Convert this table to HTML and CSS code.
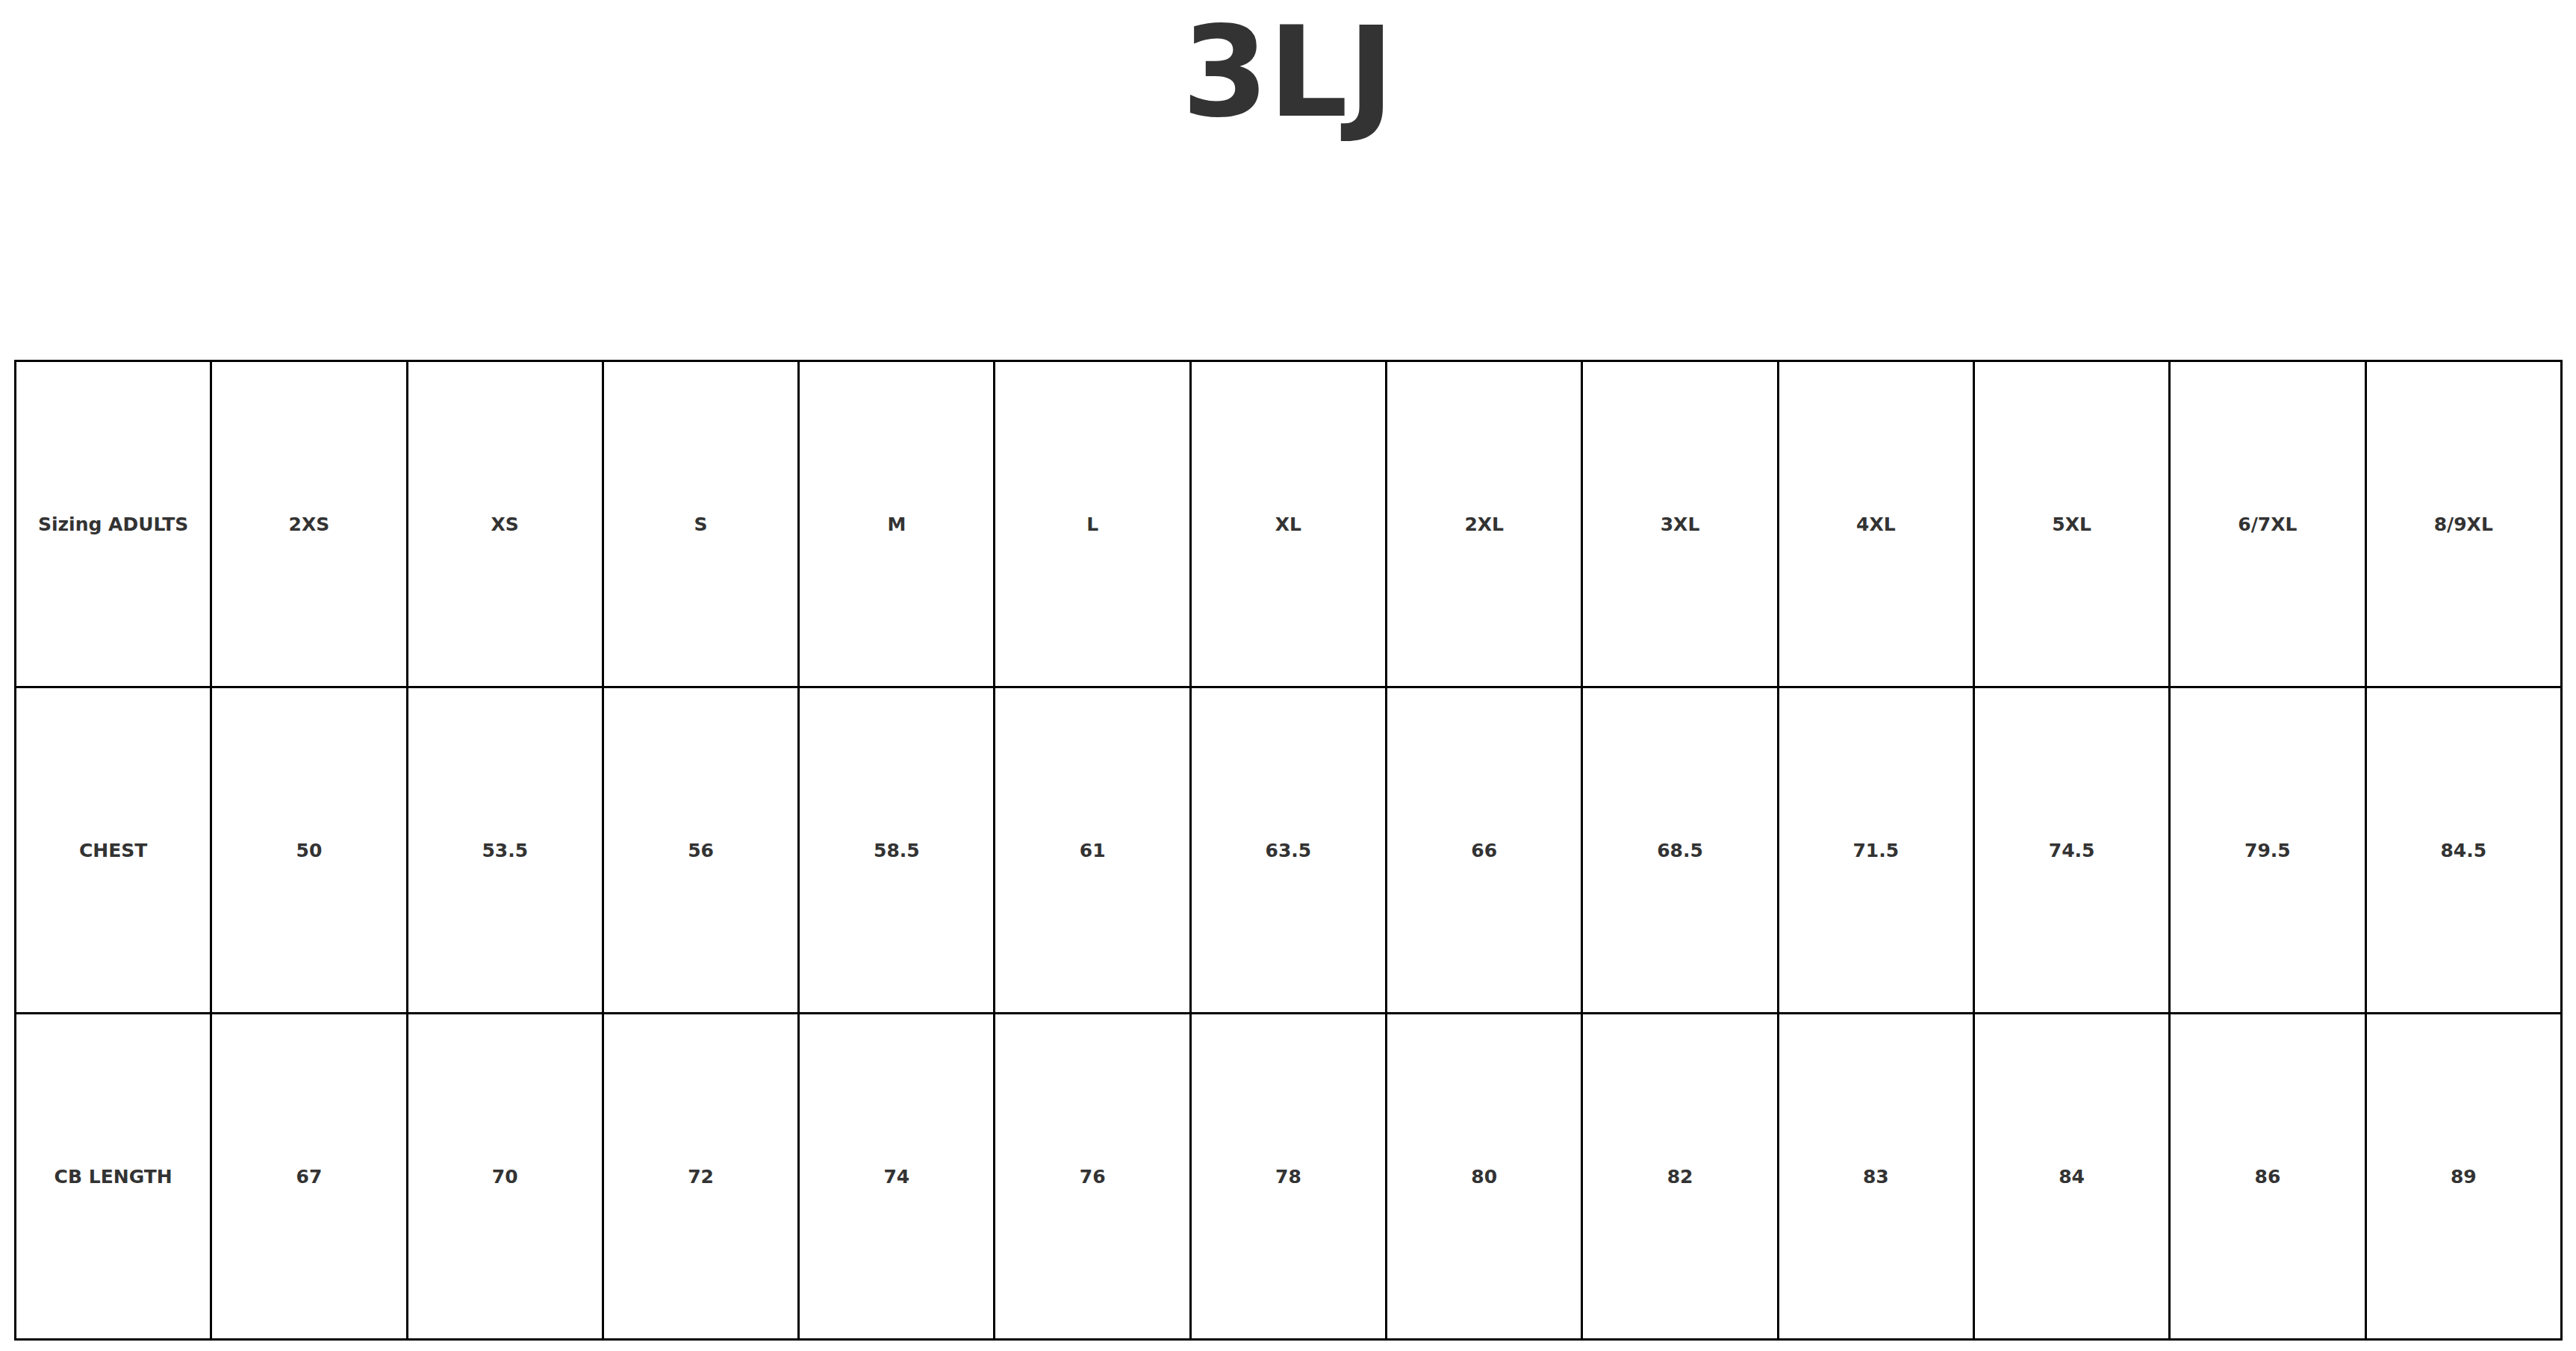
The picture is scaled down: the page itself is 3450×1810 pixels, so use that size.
FILE: index.html
```html
<!DOCTYPE html>
<html lang="en">
<head>
<meta charset="utf-8">
<title>3LJ sizing</title>
<link rel="stylesheet" href="styles.css">
</head>
<body>
<div class="page">
  <h1 class="title">3LJ</h1>
  <table class="sizes">
    <tr>
      <td>Sizing ADULTS</td><td>2XS</td><td>XS</td><td>S</td><td>M</td><td>L</td><td>XL</td><td>2XL</td><td>3XL</td><td>4XL</td><td>5XL</td><td>6/7XL</td><td>8/9XL</td>
    </tr>
    <tr>
      <td>CHEST</td><td>50</td><td>53.5</td><td>56</td><td>58.5</td><td>61</td><td>63.5</td><td>66</td><td>68.5</td><td>71.5</td><td>74.5</td><td>79.5</td><td>84.5</td>
    </tr>
    <tr>
      <td>CB LENGTH</td><td>67</td><td>70</td><td>72</td><td>74</td><td>76</td><td>78</td><td>80</td><td>82</td><td>83</td><td>84</td><td>86</td><td>89</td>
    </tr>
  </table>
</div>
</body>
</html>
```
FILE: styles.css
```css
html, body {
  margin: 0;
  padding: 0;
  background: #ffffff;
}
.page {
  padding: 0 19px;
  font-family: "DejaVu Sans", "Liberation Sans", sans-serif;
  color: #333333;
}
.title {
  margin: 0 0 288px 0;
  font-size: 167px;
  line-height: normal;
  font-weight: bold;
  text-align: center;
  color: #333333;
}
.sizes {
  width: 3413px;
  border-collapse: collapse;
  table-layout: fixed;
}
.sizes td {
  border: 3px solid #000000;
  height: 434px;
  padding: 0;
  text-align: center;
  vertical-align: middle;
  font-size: 25px;
  font-weight: bold;
  color: #333333;
}
```
